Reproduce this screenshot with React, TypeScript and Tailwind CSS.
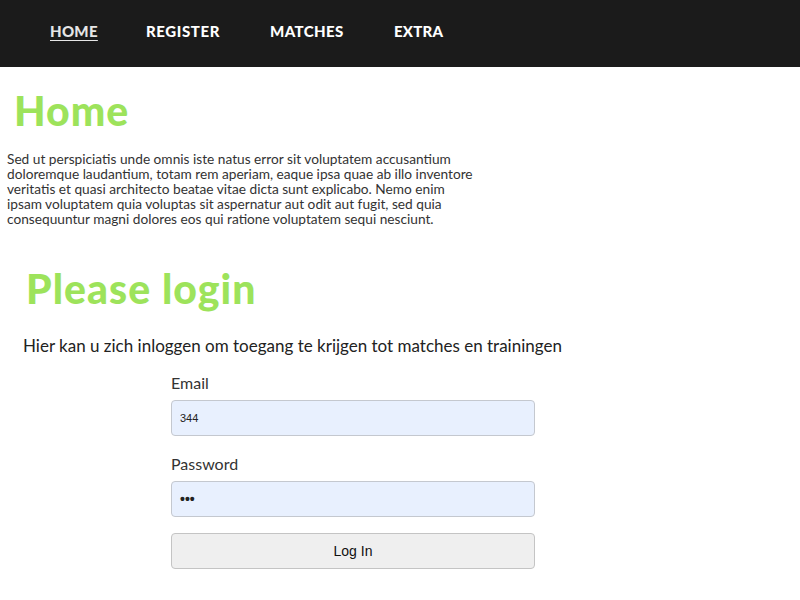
import React from "react";

export default function App() {
  const font = { fontFamily: "Lato, 'Noto Sans', sans-serif" };
  return (
    <div className="min-h-[600px] bg-white text-[#222]" style={font}>
      <nav className="h-[67px] bg-[#1b1b1b] flex items-center pl-[50px] pb-[4px]">
        <a className="w-[96px] text-[15px] font-black tracking-[0.3px] text-[#e6e6e6] underline underline-offset-[3px]">HOME</a>
        <a className="w-[124px] text-[15px] font-black tracking-[0.6px] text-white">REGISTER</a>
        <a className="w-[124px] text-[15px] font-black tracking-[0.4px] text-white">MATCHES</a>
        <a className="text-[15px] font-black tracking-[0.2px] text-white">EXTRA</a>
      </nav>
      <h1 className="ml-[14px] mt-[22px] text-[41px] leading-[44px] font-black tracking-[1px] text-[#9de35b]">Home</h1>
      <p className="ml-[7px] mt-[18px] w-[476px] text-[13.7px] leading-[15px] text-[#333]">
        Sed ut perspiciatis unde omnis iste natus error sit voluptatem accusantium doloremque laudantium, totam rem aperiam, eaque ipsa quae ab illo inventore veritatis et quasi architecto beatae vitae dicta sunt explicabo. Nemo enim ipsam voluptatem quia voluptas sit aspernatur aut odit aut fugit, sed quia consequuntur magni dolores eos qui ratione voluptatem sequi nesciunt.
      </p>
      <h2 className="ml-[26px] mt-[41px] text-[41px] leading-[44px] font-black tracking-[1px] text-[#9de35b]">Please login</h2>
      <p className="ml-[23px] mt-[25px] text-[17px] leading-[20px] text-[#222]">
        Hier kan u zich inloggen om toegang te krijgen tot matches en trainingen
      </p>
      <form className="ml-[171px] mt-[17px] w-[364px] flex flex-col">
        <label className="text-[16px] leading-[20px] text-[#333] mb-[7px]">Email</label>
        <div className="h-[36px] rounded-[4px] border border-[#c4c8cf] bg-[#e8f0fe] flex items-center px-[8px] text-[11px]" style={{ fontFamily: "'Liberation Sans', Arial, sans-serif" }}>344</div>
        <label className="text-[16px] leading-[20px] text-[#333] mt-[18px] mb-[7px]">Password</label>
        <div className="h-[36px] rounded-[4px] border border-[#c4c8cf] bg-[#e8f0fe] flex items-center px-[8px] text-[14px] font-bold" style={{ fontFamily: "'Liberation Sans', Arial, sans-serif" }}>•••</div>
        <button type="button" className="mt-[16px] h-[36px] rounded-[4px] border border-[#c4c4c4] bg-[#efefef] text-[14px] text-[#111]" style={{ fontFamily: "'Liberation Sans', Arial, sans-serif" }}>Log In</button>
      </form>
    </div>
  );
}
